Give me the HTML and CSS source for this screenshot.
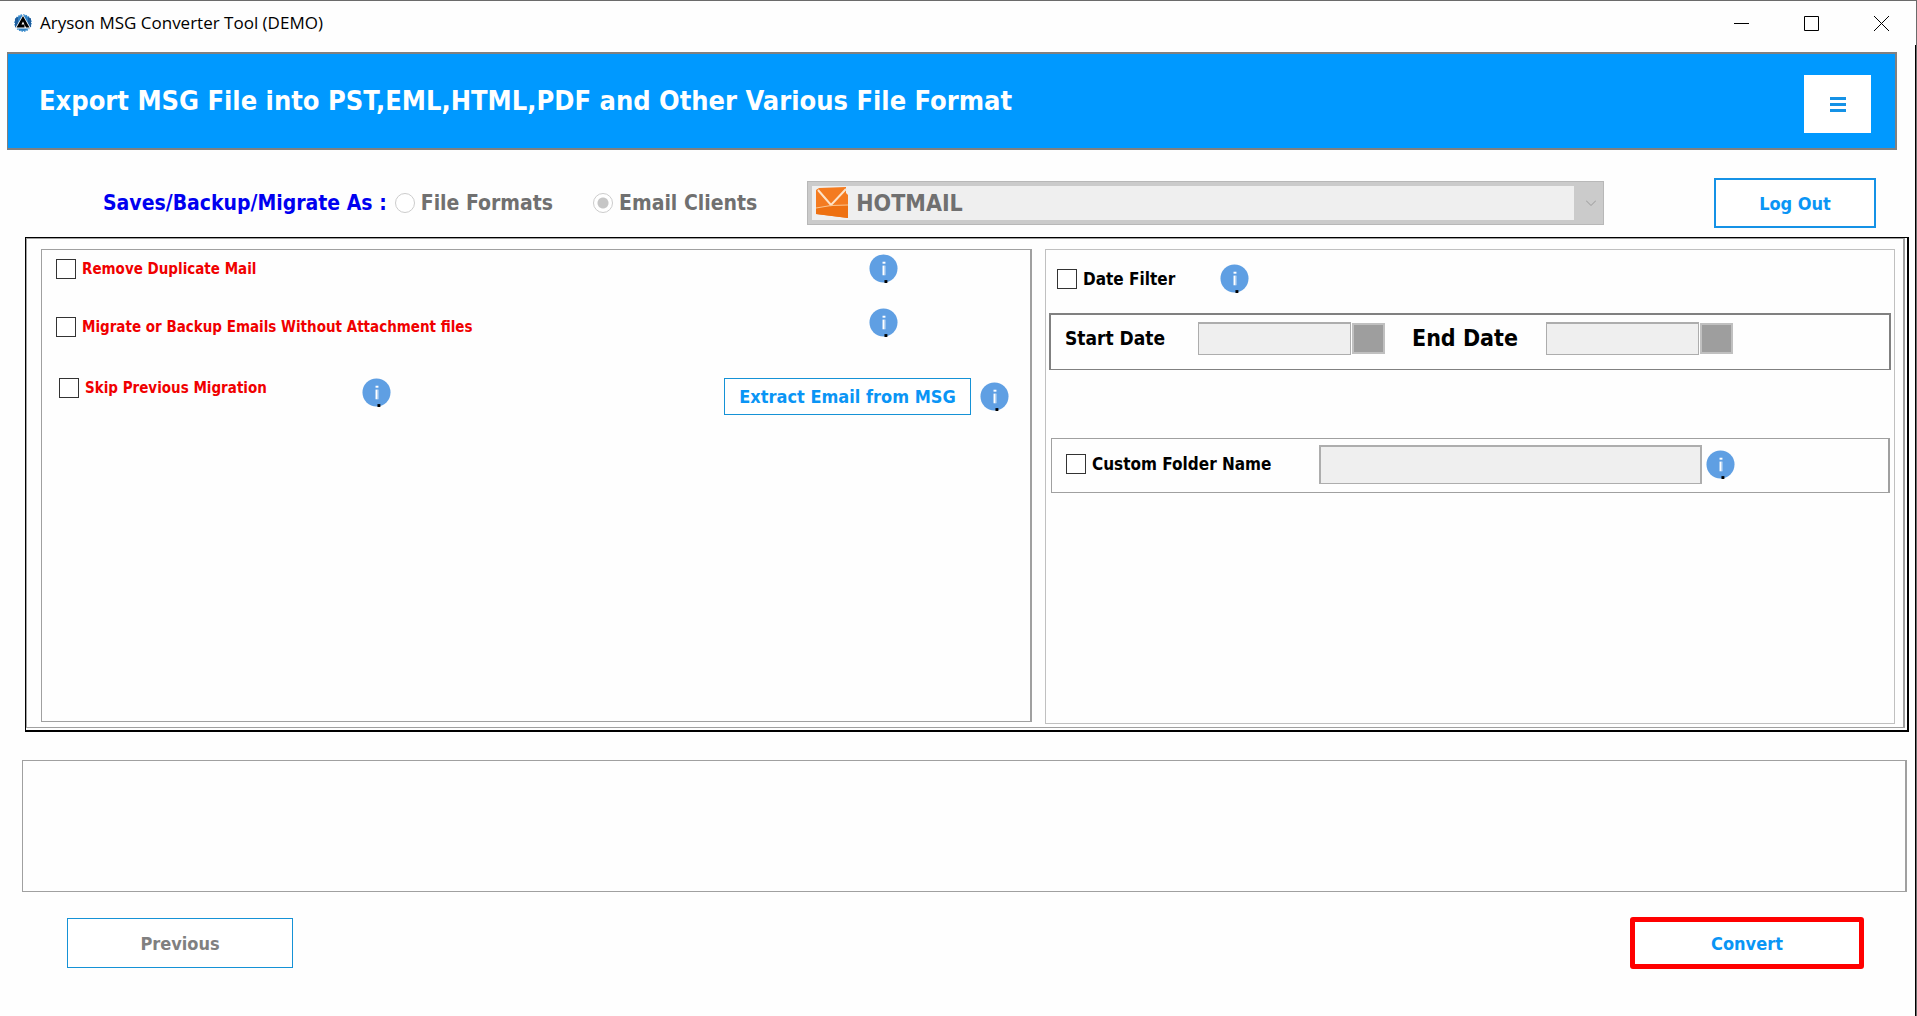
FILE: index.html
```
<!DOCTYPE html>
<html lang="en">

<head>
  <meta charset="UTF-8">
  <meta name="viewport" content="width=device-width, initial-scale=1.0">
  <title>Aryson MSG Converter Tool (DEMO)</title>
  <link rel="stylesheet" href="styles.css">
</head>

<body>
  <!-- shared icon -->
  <svg class="sprite" aria-hidden="true">
    <symbol id="icon-info" viewBox="0 0 30 30">
      <circle cx="15" cy="15" r="14.5" fill="#5f9fe3" />
      <rect x="14" y="8" width="3" height="2" fill="#fff" />
      <rect x="14" y="12" width="2" height="10" fill="#fff" />
      <rect x="16" y="12" width="1" height="10" fill="#d5e6f8" />
      <rect x="16" y="27" width="3" height="3" fill="#000" />
    </symbol>
  </svg>

  <header class="titlebar">
    <svg class="logo" viewBox="0 0 18 18" aria-hidden="true">
      <circle cx="9" cy="9" r="8" fill="#2f80c3" stroke="#3b8ccc" stroke-width="1.6" stroke-dasharray="1.5 1" />
      <path d="M1 4.500L4 3V14L1 13zM17 4.500L14 3V14L17 13z" fill="#1f5d9c" />
      <path d="M9 .5L17 14.500H1z" fill="#fff" />
      <path d="M9 2L15.500 13.500H12L9 7.500L7.500 10.500H10.500V13.500H2.500z" fill="#000" />
    </svg>
    <h1 class="title">Aryson MSG Converter Tool (DEMO)</h1>
    <div class="window-btns">
      <button type="button" aria-label="Minimize">
        <svg viewBox="0 0 15 15"><path d="M0 7.500H15" /></svg>
      </button>
      <button type="button" aria-label="Maximize">
        <svg viewBox="0 0 15 15"><path d="M.5 .5H14.500V14.500H.5z" /></svg>
      </button>
      <button type="button" aria-label="Close">
        <svg viewBox="0 0 15 15"><path d="M0 0L15 15M15 0L0 15" /></svg>
      </button>
    </div>
  </header>

  <main class="content">
    <div class="banner">
      <h2>Export MSG File into PST,EML,HTML,PDF and Other Various File Format</h2>
      <button type="button" class="btn-menu" aria-label="Menu">
        <svg viewBox="0 0 16 15"><path d="M0 1.500H16M0 7.500H16M0 13.500H16" /></svg>
      </button>
    </div>

    <div class="save-as">
      <span class="save-as-title">Saves/Backup/Migrate As :</span>
      <label class="radio"><input type="radio" name="target" disabled>File Formats</label>
      <label class="radio radio-clients"><input type="radio" name="target" checked disabled>Email Clients</label>
      <div class="client">
        <svg class="client-icon" viewBox="0 0 32 31" aria-hidden="true">
          <path d="M0 3L3 1L30 0V6L32 8V31L0 27z" fill="#f47b20" />
          <path d="M0 20L32 18V31L0 27z" fill="#ee7112" />
          <path d="M2 3L15 18L30 2" fill="none" stroke="#fde3c8" stroke-width="2" />
          <path d="M0 21L15 18.500L32 18" fill="none" stroke="#fbc894" stroke-width="1" />
        </svg>
        <select aria-label="Email client" disabled>
          <option>HOTMAIL</option>
        </select>
        <svg class="client-arrow" viewBox="0 0 10 6" aria-hidden="true"><path d="M0 .5L5 5.500L10 .5" /></svg>
      </div>
      <button type="button" class="btn btn-logout">Log Out</button>
    </div>

    <div class="frame">
      <div class="options">
        <section class="panel-left">
          <div class="row">
            <label class="check red"><input type="checkbox">Remove Duplicate Mail</label>
            <button type="button" class="info" aria-label="Info"><svg><use href="#icon-info" /></svg></button>
          </div>
          <div class="row row-attachment">
            <label class="check red"><input type="checkbox">Migrate or Backup Emails Without Attachment files</label>
            <button type="button" class="info" aria-label="Info"><svg><use href="#icon-info" /></svg></button>
          </div>
          <div class="row row-skip">
            <label class="check red"><input type="checkbox">Skip Previous Migration</label>
            <button type="button" class="info" aria-label="Info"><svg><use href="#icon-info" /></svg></button>
            <div class="extract">
              <button type="button" class="btn">Extract Email from MSG</button>
              <button type="button" class="info" aria-label="Info"><svg><use href="#icon-info" /></svg></button>
            </div>
          </div>
        </section>

        <section class="panel-right">
          <div class="date-filter">
            <label class="check"><input type="checkbox">Date Filter</label>
            <button type="button" class="info" aria-label="Info"><svg><use href="#icon-info" /></svg></button>
          </div>
          <div class="dates">
            <label for="start-date" class="start-label">Start Date</label>
            <div class="date">
              <input type="text" id="start-date" disabled>
              <button type="button" aria-label="Pick start date" disabled></button>
            </div>
            <label for="end-date" class="end-label">End Date</label>
            <div class="date">
              <input type="text" id="end-date" disabled>
              <button type="button" aria-label="Pick end date" disabled></button>
            </div>
          </div>
          <div class="folder">
            <label class="check"><input type="checkbox">Custom Folder Name</label>
            <input type="text" class="folder-name" aria-label="Custom folder name" disabled>
            <button type="button" class="info" aria-label="Info"><svg><use href="#icon-info" /></svg></button>
          </div>
        </section>
      </div>
    </div>

    <div class="log" role="log"></div>

    <footer class="actions">
      <button type="button" class="btn btn-previous" disabled>Previous</button>
      <button type="button" class="btn btn-convert">Convert</button>
    </footer>
  </main>
</body>

</html>
```
FILE: styles.css
```
* {
  box-sizing: border-box;
}

body {
  margin: 0;
  min-height: 100vh;
  display: flex;
  flex-direction: column;
  background: #fefefe;
  border-top: 1px solid #6b6b6b;
  border-right: 1px solid #6b6b6b;
  font-family: "DejaVu Sans Condensed", "Noto Sans", sans-serif;
  font-weight: bold;
  color: #000;
}

h1,
h2 {
  margin: 0;
}

button,
input,
select {
  margin: 0;
  font: inherit;
}

svg {
  display: block;
}

.sprite {
  position: absolute;
  width: 0;
  height: 0;
}

/* title bar */
.titlebar {
  display: flex;
  align-items: center;
  height: 44px;
  padding-left: 14px;
}

.logo {
  width: 18px;
  height: 18px;
}

.title {
  flex: 1;
  padding-left: 8px;
  font: 17px/24px "Open Sans", sans-serif;
}

.window-btns {
  display: flex;
}

.window-btns button {
  width: 70px;
  height: 44px;
  padding: 0;
  border: none;
  background: none;
}

.window-btns svg {
  width: 15px;
  height: 15px;
  margin: auto;
  fill: none;
  stroke: #000;
}

/* content */
.content {
  flex: 1;
  display: flex;
  flex-direction: column;
  padding-top: 7px;
  border-right: 1px solid #000;
}

.banner {
  display: flex;
  align-items: flex-end;
  justify-content: space-between;
  height: 98px;
  margin: 0 18px 0 7px;
  padding: 0 24px 15px 31px;
  background: #0099ff;
  border: 2px solid #808080;
  border-left-width: 1px;
}

.banner h2 {
  font-size: 27px;
  line-height: 64px;
  color: #fff;
}

.btn-menu {
  width: 67px;
  height: 58px;
  padding: 0;
  background: #fff;
  border: none;
}

.btn-menu svg {
  width: 16px;
  height: 15px;
  margin: auto;
  stroke: #1592e6;
  stroke-width: 3;
}

.btn {
  height: 50px;
  padding: 0;
  background: #fff;
  border: 1px solid #1592d6;
  font-size: 18px;
  color: #0a95f5;
}

/* target format row */
.save-as {
  display: flex;
  align-items: center;
  margin: 28px 39px 9px 103px;
  font-size: 21px;
}

.save-as-title {
  color: #0000f0;
}

.radio {
  display: flex;
  align-items: center;
  gap: 6px;
  margin-left: 8px;
  color: #707070;
}

.radio-clients {
  margin-left: 40px;
}

.radio input {
  appearance: none;
  width: 20px;
  height: 20px;
  background: #fff;
  border: 1px solid #ccc;
  border-radius: 50%;
}

.radio input:checked {
  background: radial-gradient(circle, #c6c6c6 5px, #fff 6px);
}

.client {
  position: relative;
  flex: 1;
  margin: 0 110px 0 50px;
}

.client select {
  appearance: none;
  display: block;
  width: 100%;
  height: 44px;
  padding: 0 36px 0 44px;
  background: #efefef;
  border: 5px solid #cbcbcb;
  border-right-width: 30px;
  border-radius: 0;
  outline: 1px solid #b8b8b8;
  outline-offset: -1px;
  font-size: 23px;
  color: #707070;
  opacity: 1;
}

.client-icon {
  position: absolute;
  left: 9px;
  top: 6px;
  width: 32px;
  height: 31px;
}

.client-arrow {
  position: absolute;
  right: 8px;
  top: 19px;
  width: 10px;
  height: 6px;
  fill: none;
  stroke: #999;
}

.btn-logout {
  width: 162px;
  border-width: 2px;
  border-color: #1592e6;
}

/* options */
.frame {
  flex: 1;
  display: flex;
  margin: 0 6px 0 25px;
  padding: 0 2px 2px 0;
  border: solid #000;
  border-width: 1px 2px 2px 1px;
}

.options {
  flex: 1;
  display: grid;
  grid-template-columns: 991fr 850fr;
  gap: 13px;
  padding: 10px 8px 3px 14px;
  border: 1px solid #a0a0a0;
  border-right-width: 2px;
}

.panel-left {
  padding: 4px 0 0 14px;
  border: 1px solid #a0a0a0;
  border-right-width: 2px;
  margin-bottom: 2px;
}

.panel-right {
  padding: 0 3px;
  border: 1px solid #c0c0c0;
}

.row {
  display: flex;
  align-items: center;
  justify-content: space-between;
  padding-right: 132px;
}

.row-attachment {
  align-items: flex-end;
  margin-top: 25px;
}

.row-skip {
  align-items: flex-start;
  margin-top: 41px;
  padding: 0 21px 0 3px;
}

.check {
  display: flex;
  align-items: center;
  gap: 6px;
  font-size: 17px;
  line-height: 20px;
}

.check input {
  appearance: none;
  width: 20px;
  height: 20px;
  background: #fff;
  border: 1px solid #333;
}

.check input:checked {
  background: #333;
  box-shadow: inset 0 0 0 4px #fff;
}

.red {
  font-size: 15px;
  color: #f00000;
}

.info {
  flex: none;
  width: 29px;
  height: 29px;
  padding: 0;
  border: none;
  background: none;
}

.info svg {
  width: 29px;
  height: 29px;
}

.row-skip .check {
  width: 303px;
}

.extract {
  display: flex;
  align-items: center;
  gap: 9px;
  margin-left: auto;
}

.extract .btn {
  width: 247px;
  height: 37px;
}

.date-filter {
  display: flex;
  align-items: center;
  padding: 14px 8px 20px;
}

.date-filter .check {
  width: 163px;
}

.dates {
  display: flex;
  align-items: center;
  height: 57px;
  padding: 0 14px 8px;
  border: 2px solid #808080;
  border-bottom-width: 1px;
}

.start-label {
  width: 133px;
  font-size: 19px;
}

.end-label {
  width: 134px;
  margin-left: 27px;
  font-size: 23px;
}

.date {
  display: flex;
  align-items: center;
  gap: 1px;
}

.date input {
  width: 153px;
  height: 33px;
  background: #efefef;
  border: 1px solid #adadad;
  border-top-width: 2px;
}

.date button {
  width: 33px;
  height: 31px;
  background: #9e9e9e;
  border: 2px solid #c0c0c0;
}

.folder {
  display: flex;
  align-items: center;
  height: 55px;
  margin: 68px 1px 0 2px;
  padding: 0 14px 3px;
  border: 1px solid #a0a0a0;
  border-right-width: 2px;
}

.folder .check {
  width: 253px;
}

.folder-name {
  width: 383px;
  height: 39px;
  margin-right: 4px;
  background: #efefef;
  border: 2px solid #adadad;
  border-bottom-width: 1px;
}

/* log and buttons */
.log {
  height: 132px;
  margin: 28px 8px 0 22px;
  border: 1px solid #a0a0a0;
  border-right-width: 2px;
}

.actions {
  display: flex;
  align-items: center;
  justify-content: space-between;
  margin: 25px 51px 47px 67px;
}

.btn-previous {
  width: 226px;
  color: #808080;
}

.btn-convert {
  width: 234px;
  height: 52px;
  border: 5px solid #ff0000;
  border-radius: 3px;
}
```
